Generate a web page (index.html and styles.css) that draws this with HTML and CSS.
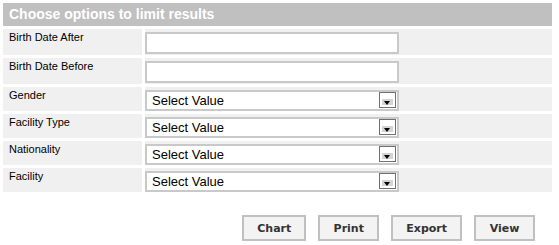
FILE: index.html
```html
<!DOCTYPE html>
<html lang="en">

<head>
  <meta charset="UTF-8">
  <title>Choose options to limit results</title>
  <link rel="stylesheet" href="styles.css">
</head>

<body>
  <table class="options">
    <thead>
      <tr>
        <th colspan="2">Choose options to limit results</th>
      </tr>
    </thead>
    <tbody>
      <tr>
        <td class="label">Birth Date After</td>
        <td class="field"><input type="text" class="text-input"></td>
      </tr>
      <tr>
        <td class="label">Birth Date Before</td>
        <td class="field"><input type="text" class="text-input"></td>
      </tr>
      <tr>
        <td class="label">Gender</td>
        <td class="field">
          <div class="select-box">
            <select><option>Select Value</option></select>
            <span class="arrow"></span>
          </div>
        </td>
      </tr>
      <tr>
        <td class="label">Facility Type</td>
        <td class="field">
          <div class="select-box">
            <select><option>Select Value</option></select>
            <span class="arrow"></span>
          </div>
        </td>
      </tr>
      <tr>
        <td class="label">Nationality</td>
        <td class="field">
          <div class="select-box">
            <select><option>Select Value</option></select>
            <span class="arrow"></span>
          </div>
        </td>
      </tr>
      <tr>
        <td class="label">Facility</td>
        <td class="field">
          <div class="select-box">
            <select><option>Select Value</option></select>
            <span class="arrow"></span>
          </div>
        </td>
      </tr>
    </tbody>
  </table>

  <div class="actions">
    <button type="button">Chart</button>
    <button type="button">Print</button>
    <button type="button">Export</button>
    <button type="button">View</button>
  </div>
</body>

</html>
```

FILE: styles.css
```css
body {
  margin: 0;
  font-family: "Liberation Sans", Arial, sans-serif;
  background: #fff;
}

.options {
  width: 555px;
  border-spacing: 3px;
}

.options th {
  background-color: #c0c0c0;
  color: #fff;
  font-size: 14px;
  font-weight: bold;
  text-align: left;
  height: 23px;
  line-height: 23px;
  padding: 0 6px;
}

.options td {
  background-color: #f0f0f0;
  vertical-align: top;
}

.label {
  width: 127px;
  font-size: 11px;
  color: #000;
  padding: 2px 6px 0;
}

.field {
  padding: 3px 0 0;
}

.text-input {
  display: block;
  box-sizing: border-box;
  width: 254px;
  height: 22px;
  margin: 0 0 1px;
  border: 2px solid #c9c9c9;
  background: #fff;
  padding: 0 5px;
}

.select-box {
  position: relative;
  width: 254px;
  height: 21px;
}

.select-box select {
  display: block;
  box-sizing: border-box;
  width: 100%;
  height: 21px;
  border: 2px solid #c9c9c9;
  border-radius: 0;
  background: #fff;
  padding: 0 5px;
  font-family: "Liberation Sans", Arial, sans-serif;
  font-size: 13px;
  color: #000;
  appearance: none;
  -webkit-appearance: none;
}

/* old style dropdown button */
.arrow {
  position: absolute;
  top: 2px;
  right: 3px;
  width: 17px;
  height: 16px;
  box-sizing: border-box;
  border: 1px solid #707070;
  background: #fff;
}

.arrow::before {
  content: "";
  position: absolute;
  left: 2px;
  right: 2px;
  top: 6px;
  bottom: 2px;
  background: #d4d4d4;
}

.arrow::after {
  content: "";
  position: absolute;
  left: 4px;
  top: 8px;
  border-left: 3.5px solid transparent;
  border-right: 3.5px solid transparent;
  border-top: 4px solid #000;
}

.actions {
  display: flex;
  justify-content: flex-end;
  gap: 12px;
  margin-top: 20px;
  padding-right: 24px;
}

.actions button {
  height: 26px;
  min-width: 61px;
  padding: 0 13px;
  border: 2px solid #c0c0c0;
  background: #f3f3f3;
  font-family: "DejaVu Sans", Verdana, sans-serif;
  font-size: 11px;
  font-weight: bold;
  color: #333;
}
```
